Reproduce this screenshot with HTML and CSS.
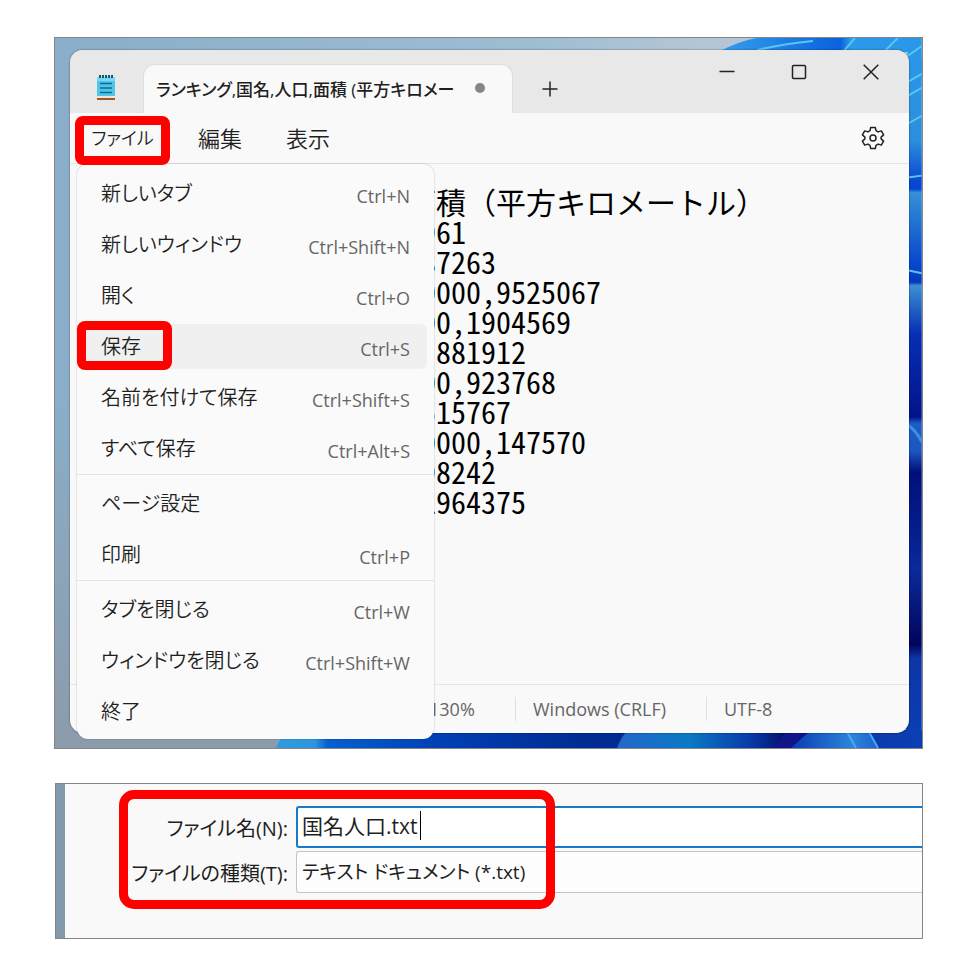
FILE: index.html
```html
<!DOCTYPE html>
<html lang="ja">
<head>
<meta charset="utf-8">
<meta name="viewport" content="width=device-width, initial-scale=1">
<title>メモ帳</title>
<link rel="stylesheet" href="styles.css">
</head>
<body>
<main class="page">
  <section class="desktop">
    <svg class="wallpaper wallpaper-top" viewBox="0 0 214 712" aria-hidden="true">
      <defs>
        <linearGradient id="side" x1="0" y1="0" x2="0" y2="1">
          <stop offset="0" stop-color="#2b96e8"/><stop offset=".12" stop-color="#2a8fdc"/>
          <stop offset=".18" stop-color="#0846d0"/><stop offset=".19" stop-color="#0846d0"/>
          <stop offset=".195" stop-color="#3591d6"/><stop offset=".3" stop-color="#0745cc"/>
          <stop offset=".325" stop-color="#0639bd"/><stop offset=".33" stop-color="#3b8fd3"/>
          <stop offset=".4" stop-color="#062fb2"/><stop offset=".52" stop-color="#02138b"/>
          <stop offset=".53" stop-color="#1b5ec9"/><stop offset=".57" stop-color="#1c55bf"/>
          <stop offset=".6" stop-color="#020f7a"/><stop offset=".7" stop-color="#06208f"/>
          <stop offset=".74" stop-color="#0b2a9c"/><stop offset=".85" stop-color="#02045c"/>
          <stop offset=".87" stop-color="#0d35a8"/><stop offset="1" stop-color="#0b3fb4"/>
        </linearGradient>
        <linearGradient id="ribbon"><stop offset="0" stop-color="#35a0ec"/><stop offset=".6" stop-color="#0a62dd"/><stop offset=".65" stop-color="#2b9aea"/><stop offset="1" stop-color="#2b96e8"/></linearGradient>
      </defs>
      <path fill="url(#ribbon)" d="M10 14Q28 4 48 0H214V40H200V14Z"/>
      <rect x="198" y="20" width="16" height="692" fill="url(#side)"/>
      <g fill="none" stroke="#5cc4f0" stroke-width="2">
        <path d="M49 12Q75 6 105 3M136 13 147 0M177 13 190 0M200 18 214 8M200 44 214 36M200 58 214 50M200 86 214 78M200 140 214 138M200 233 214 236"/>
      </g>
      <path fill="none" stroke="#3f8fdd" stroke-width="3" d="M200 388Q209 394 214 405"/>
    </svg>
    <svg class="wallpaper wallpaper-bottom" viewBox="0 0 646 18" preserveAspectRatio="none" aria-hidden="true">
      <defs>
        <linearGradient id="floor"><stop offset="0" stop-color="#2f9be0"/><stop offset=".06" stop-color="#2f95dd"/><stop offset=".08" stop-color="#0560cf"/><stop offset=".25" stop-color="#0140b5"/><stop offset=".48" stop-color="#002c91"/><stop offset=".62" stop-color="#062a93"/><stop offset="1" stop-color="#0b3fb4"/></linearGradient>
        <linearGradient id="petal"><stop offset="0" stop-color="#2467c8"/><stop offset=".4" stop-color="#0b79c6"/><stop offset=".75" stop-color="#083aa7"/><stop offset="1" stop-color="#02055c"/></linearGradient>
        <linearGradient id="petal2"><stop offset="0" stop-color="#0c3cb2"/><stop offset=".7" stop-color="#2b85da"/><stop offset="1" stop-color="#1c62cf"/></linearGradient>
      </defs>
      <path fill="url(#floor)" d="M0 18Q4 8 12 0H646V18Z"/>
      <path fill="url(#petal)" d="M341 18Q345 7 352 0H520L500 18Z"/>
      <path fill="#12148a" d="M496 18 512 0H540L520 18Z"/>
      <path fill="url(#petal2)" d="M515 18 535 0H592L602 18Z"/>
      <path fill="none" stroke="#4aa8ee" stroke-width="2" d="M570 0 580 18M592 0 602 18"/>
    </svg>

    <article class="window">
      <header class="titlebar">
        <svg class="app-icon" viewBox="0 0 20 26" aria-hidden="true">
          <path fill="#9c5a2c" d="M1 22h18v3H1z"/><path fill="#f2e6dc" d="M1 21h18v2H1z"/>
          <path fill="#4fc6e8" d="M1 2h18v19H1z"/><path fill="#76daf3" d="M1 2h18v4H1z"/>
          <path stroke="#17536b" stroke-width="2" d="M4 0v3M7 0v3M10 0v3M13 0v3M16 0v3"/>
          <path stroke="#0b6d94" stroke-width="1.500" d="M4 8.500h12M4 13h12M4 17.500h12"/>
        </svg>
        <div class="tab"><span>ランキング,国名,人口,面積 (平方キロメー</span><i class="unsaved"></i></div>
        <button class="new-tab" aria-label="新しいタブを追加"><svg viewBox="0 0 16 16"><path d="M8 .5v15M.5 8h15"/></svg></button>
        <div class="caption">
          <button aria-label="最小化"><svg viewBox="0 0 16 16"><path d="M.5 7.500h15"/></svg></button>
          <button aria-label="最大化"><svg viewBox="0 0 16 16"><rect x="1.500" y="1.500" width="13" height="13" rx="1"/></svg></button>
          <button aria-label="閉じる"><svg viewBox="0 0 16 16"><path d="M.7.7l14.600 14.600M15.300.7.7 15.300"/></svg></button>
        </div>
      </header>
      <nav class="menubar">
        <button class="menu-file marked">ファイル</button>
        <button>編集</button>
        <button>表示</button>
        <button class="settings" aria-label="設定"><svg viewBox="0 0 24 24"><path d="M9.700 1.500h4.600l.7 3.200 2.100 1.200 3.200-1 2.300 4-2.500 2.200v1.800l2.500 2.200-2.300 4-3.200-1-2.100 1.200-.7 3.200H9.700L9 19.300l-2.100-1.200-3.200 1-2.300-4 2.500-2.200v-1.800L1.400 8.900l2.300-4 3.200 1L9 4.700z"/><circle cx="12" cy="12" r="3"/></svg></button>
      </nav>
      <textarea class="editor" aria-label="本文" spellcheck="false" wrap="off">面積（平方キロメートル）
6961
287263
00000,9525067
000,1904569
0,881912
000,923768
8515767
00000,147570
098242
,1964375</textarea>
      <footer class="statusbar">
        <span class="zoom">130%</span><span class="eol">Windows (CRLF)</span><span class="encoding">UTF-8</span>
      </footer>

      <div class="dropdown" role="menu">
        <button role="menuitem"><span>新しいタブ</span><kbd>Ctrl+N</kbd></button>
        <button role="menuitem"><span>新しいウィンドウ</span><kbd>Ctrl+Shift+N</kbd></button>
        <button role="menuitem"><span>開く</span><kbd>Ctrl+O</kbd></button>
        <button role="menuitem" class="current marked"><span>保存</span><kbd>Ctrl+S</kbd></button>
        <button role="menuitem"><span>名前を付けて保存</span><kbd>Ctrl+Shift+S</kbd></button>
        <button role="menuitem"><span>すべて保存</span><kbd>Ctrl+Alt+S</kbd></button>
        <hr>
        <button role="menuitem"><span>ページ設定</span></button>
        <button role="menuitem"><span>印刷</span><kbd>Ctrl+P</kbd></button>
        <hr>
        <button role="menuitem"><span>タブを閉じる</span><kbd>Ctrl+W</kbd></button>
        <button role="menuitem"><span>ウィンドウを閉じる</span><kbd>Ctrl+Shift+W</kbd></button>
        <button role="menuitem"><span>終了</span></button>
      </div>
    </article>
  </section>

  <section class="dialog">
    <form class="fields">
      <label for="file-name">ファイル名(N):</label>
      <div class="field"><input id="file-name" type="text" value="国名人口.txt"><i class="caret"></i></div>
      <label for="file-type">ファイルの種類(T):</label>
      <div class="field"><select id="file-type"><option>テキスト ドキュメント (*.txt)</option></select></div>
    </form>
  </section>
</main>
</body>
</html>
```
FILE: styles.css
```css
*, *::before, *::after { box-sizing: border-box; }

body {
  margin: 0;
  background: #fff;
  color: #1f1f1f;
  font-family: "Open Sans", "Noto Sans CJK JP", sans-serif;
  font-size: 20px;
}

button, input, select, textarea, kbd {
  font: inherit;
  color: inherit;
}

button {
  margin: 0;
  padding: 0;
  border: 0;
  background: none;
}

svg { display: block; }

button svg {
  width: 16px;
  height: 16px;
  fill: none;
  stroke: #222;
  stroke-width: 1.5;
}

.page { padding: 37px 53px 26px 54px; }

/* Desktop with the editor window */
.desktop {
  position: relative;
  padding: 12px 13px 15px 15px;
  border: 1px solid #858585;
  background: linear-gradient(90deg, #8aaec9, #9ebdd3 55%, #b4c6d5 75%);
}

.desktop::before {
  content: "";
  position: absolute;
  inset: 50% 50% 0 0;
  background: linear-gradient(180deg, #8aaec900, #8b9bab);
}

.wallpaper { position: absolute; }
.wallpaper-top { top: 0; right: 0; width: 214px; height: 100%; }
.wallpaper-bottom { bottom: 0; left: 221px; right: 0; width: calc(100% - 221px); height: 18px; }

.window {
  position: relative;
  border-radius: 13px;
  background: #f9f9f9;
  box-shadow: 0 0 2px #0008;
}

.titlebar {
  display: flex;
  height: 63px;
  padding-left: 26px;
  border-radius: 13px 13px 0 0;
  background: #e8e8e8;
}

.app-icon {
  width: 20px;
  height: 26px;
  margin-top: 25px;
}

.tab {
  display: flex;
  align-items: center;
  justify-content: space-between;
  width: 370px;
  margin: 14px 0 0 27px;
  padding: 0 27px 2px 12px;
  border: 1px solid #dcdfe0;
  border-bottom: 0;
  border-radius: 12px 12px 0 0;
  background: #f9f9f9;
  font-size: 17px;
  font-weight: 500;
  font-feature-settings: "palt";
  white-space: nowrap;
}

.unsaved {
  width: 10px;
  height: 10px;
  border-radius: 50%;
  background: #868686;
}

.new-tab {
  align-self: flex-start;
  margin: 31px 0 0 29px;
}

.caption {
  display: flex;
  align-items: flex-start;
  gap: 56px;
  margin: 14px 30px 0 auto;
}

.menubar {
  display: flex;
  align-items: center;
  height: 51px;
  padding: 0 24px 0 21px;
  border-bottom: 1px solid #e5e5e5;
}

.menubar button {
  margin-right: 44px;
  line-height: 31px;
  font-size: 22px;
  font-weight: 350;
  font-feature-settings: "palt";
}

.menubar .menu-file {
  width: 63px;
  font-size: 18px;
  white-space: nowrap;
}

.menubar .settings { margin: 0 0 0 auto; }

.settings svg {
  width: 24px;
  height: 24px;
  stroke-linejoin: round;
}

.marked {
  position: relative;
  z-index: 1;
}

.marked::after {
  content: "";
  position: absolute;
  width: 95px;
  height: 49px;
  border: 9px solid #f00;
  border-radius: 8px;
}

.menu-file::after {
  top: -7px;
  left: -16px;
}

.editor {
  display: block;
  width: 100%;
  height: 520px;
  padding: 22px 0 0 336px;
  border: 0;
  outline: 0;
  background: none;
  resize: none;
  overflow: hidden;
  color: #000;
  font-family: "Noto Sans CJK JP", sans-serif;
  font-feature-settings: "hwid";
  font-size: 30px;
  line-height: 30px;
}

.editor::first-line { font-feature-settings: normal; }

.statusbar {
  display: flex;
  align-items: center;
  height: 49px;
  padding-left: 359px;
  border-top: 1px solid #e7e7e7;
  color: #666;
  font-size: 18px;
}

.statusbar span {
  padding-left: 17px;
  border-left: 1px solid #e0e0e0;
  line-height: 24px;
}

.statusbar .zoom { width: 86px; padding-left: 0; border: 0; }
.statusbar .eol { width: 191px; }

/* File menu */
.dropdown {
  position: absolute;
  top: 114px;
  left: 7px;
  display: flex;
  flex-direction: column;
  width: 357px;
  padding: 4px 7px 2px;
  border-radius: 11px;
  background: #fafafa;
  box-shadow: 0 0 2px #0004;
}

.dropdown button {
  display: flex;
  align-items: center;
  justify-content: space-between;
  height: 45px;
  margin: 3px 0;
  padding: 0 17px;
  border-radius: 6px;
}

.dropdown span {
  font-weight: 350;
  font-feature-settings: "palt";
  line-height: 30px;
}

.dropdown kbd {
  padding-top: 4px;
  color: #666;
  font-size: 18px;
}

.dropdown hr {
  width: 357px;
  margin: 0 -7px 3px;
  border: 0;
  border-top: 1px solid #e3e3e3;
}

.dropdown .current { background: #f0f0f0; }

.current::after {
  top: -3px;
  left: -7px;
}

/* Save dialog */
.dialog {
  position: relative;
  margin: 34px 0 0 1px;
  padding: 22px 0 45px 9px;
  border: 1px solid #858585;
  background: linear-gradient(90deg, #8298ab 9px, #f9f9f9 9px);
}

.dialog::after {
  content: "";
  position: absolute;
  top: 6px;
  left: 63px;
  width: 436px;
  height: 119px;
  border: 9px solid #f00;
  border-radius: 15px;
}

.fields {
  display: grid;
  grid-template-columns: 223px 1fr;
  column-gap: 8px;
  row-gap: 3px;
  align-items: center;
}

.fields label {
  text-align: right;
  white-space: nowrap;
  font-feature-settings: "palt";
}

.field { position: relative; }

.field input, .field select {
  display: block;
  width: 100%;
  height: 42px;
  padding: 0 5px;
  border: 1px solid #c4c4c4;
  border-right: 0;
  border-radius: 3px 0 0 3px;
  outline: 0;
  appearance: none;
  background: #fdfdfd;
  font-size: 19px;
  font-feature-settings: "palt";
}

.field input {
  padding: 0 4px 4px;
  border: 2px solid #1779c9;
  border-right: 0;
  background: #fff;
  font-size: 21px;
}

.caret {
  position: absolute;
  top: 5px;
  left: 124px;
  width: 1px;
  height: 29px;
  background: #000;
}
```
